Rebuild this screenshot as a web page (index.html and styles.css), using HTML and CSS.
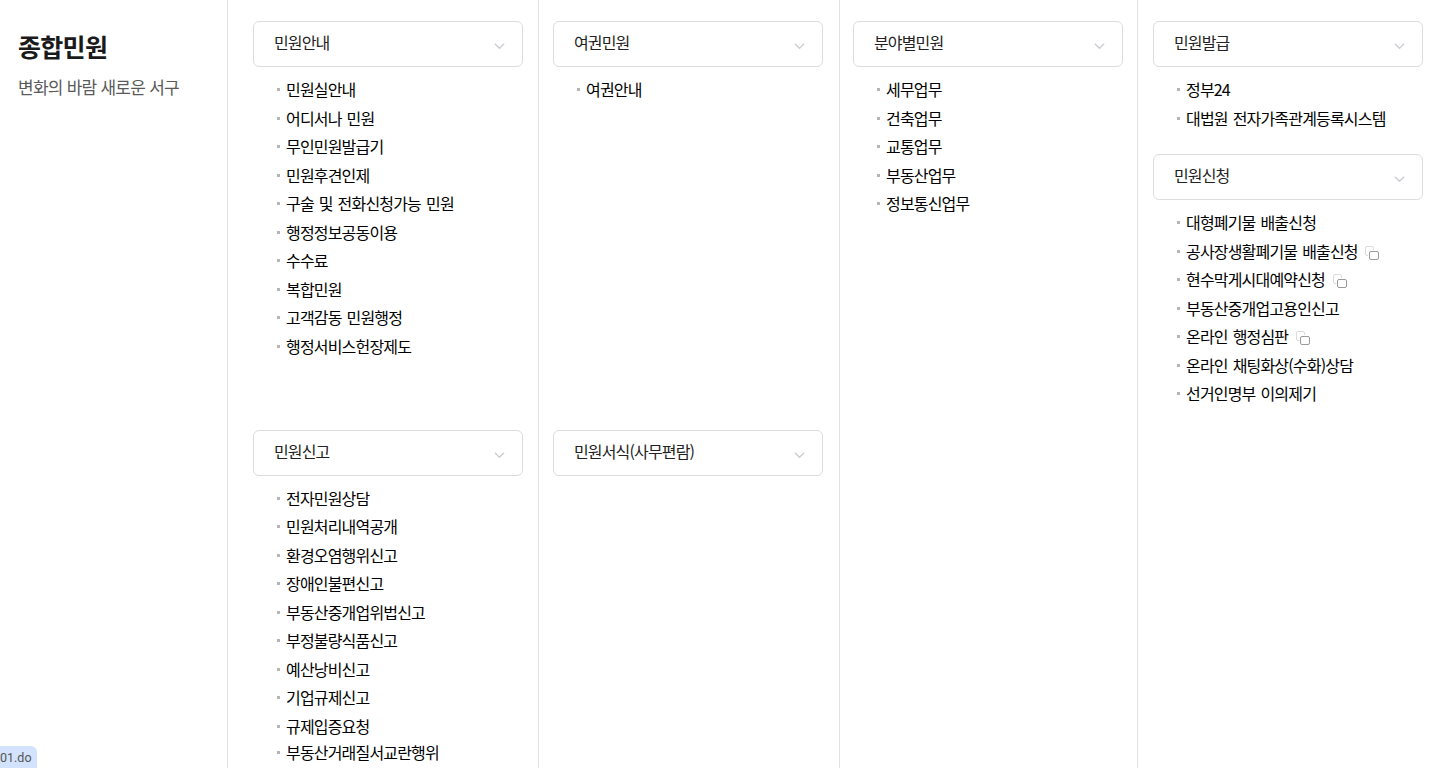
FILE: index.html
```html
<!DOCTYPE html>
<html lang="ko">
<head>
<meta charset="utf-8">
<title>종합민원</title>
<link rel="stylesheet" href="styles.css">
</head>
<body>
<svg class="defs" width="0" height="0" aria-hidden="true">
  <symbol id="chev" viewBox="0 0 12 8"><path d="M1 1.500l5 5 5-5" fill="none" stroke="#c9ccd1" stroke-width="1.300"/></symbol>
  <symbol id="win" viewBox="0 0 14 14">
    <path d="M3 9.500H2A1.500 1.500 0 0 1 .5 8V2A1.500 1.500 0 0 1 2 .5h5A1.500 1.500 0 0 1 8.500 2v2" fill="none" stroke="#dcdcdc"/>
    <rect x="4.500" y="5.500" width="9" height="8" rx="1.500" fill="#fff" stroke="#9a9a9a"/>
  </symbol>
</svg>
<div class="page">
  <aside class="side">
    <h1 class="side-title">종합민원</h1>
    <p class="side-sub">변화의 바람 새로운 서구</p>
  </aside>
  <main class="cols">
    <div class="col col-a">
      <section class="group group-tall">
        <div class="head"><span>민원안내</span><svg class="chev"><use href="#chev"/></svg></div>
        <ul class="list">
          <li>민원실안내</li><li>어디서나 민원</li><li>무인민원발급기</li><li>민원후견인제</li><li>구술 및 전화신청가능 민원</li><li>행정정보공동이용</li><li>수수료</li><li>복합민원</li><li>고객감동 민원행정</li><li>행정서비스헌장제도</li>
        </ul>
      </section>
      <section class="group">
        <div class="head"><span>민원신고</span><svg class="chev"><use href="#chev"/></svg></div>
        <ul class="list list-alt">
          <li>전자민원상담</li><li>민원처리내역공개</li><li>환경오염행위신고</li><li>장애인불편신고</li><li>부동산중개업위법신고</li><li>부정불량식품신고</li><li>예산낭비신고</li><li>기업규제신고</li><li>규제입증요청</li><li class="tight">부동산거래질서교란행위</li>
        </ul>
      </section>
    </div>
    <div class="col col-b">
      <section class="group group-tall">
        <div class="head"><span>여권민원</span><svg class="chev"><use href="#chev"/></svg></div>
        <ul class="list"><li>여권안내</li></ul>
      </section>
      <section class="group">
        <div class="head"><span>민원서식(사무편람)</span><svg class="chev"><use href="#chev"/></svg></div>
      </section>
    </div>
    <div class="col col-c">
      <section class="group">
        <div class="head"><span>분야별민원</span><svg class="chev"><use href="#chev"/></svg></div>
        <ul class="list"><li>세무업무</li><li>건축업무</li><li>교통업무</li><li>부동산업무</li><li>정보통신업무</li></ul>
      </section>
    </div>
    <div class="col col-d">
      <section class="group group-short">
        <div class="head"><span>민원발급</span><svg class="chev"><use href="#chev"/></svg></div>
        <ul class="list"><li>정부24</li><li>대법원 전자가족관계등록시스템</li></ul>
      </section>
      <section class="group">
        <div class="head"><span>민원신청</span><svg class="chev"><use href="#chev"/></svg></div>
        <ul class="list">
          <li>대형폐기물 배출신청</li>
          <li>공사장생활폐기물 배출신청<svg class="win"><use href="#win"/></svg></li>
          <li>현수막게시대예약신청<svg class="win"><use href="#win"/></svg></li>
          <li>부동산중개업고용인신고</li>
          <li>온라인 행정심판<svg class="win"><use href="#win"/></svg></li>
          <li>온라인 채팅화상(수화)상담</li>
          <li>선거인명부 이의제기</li>
        </ul>
      </section>
    </div>
  </main>
</div>
<div class="status">01.do</div>
</body>
</html>
```
FILE: styles.css
```css
* { box-sizing: border-box; }
html, body { margin: 0; height: 768px; overflow: hidden; background: #fff; }
body { font-family: "Noto Sans CJK KR", "Noto Sans", sans-serif; color: #111; }
.defs { position: absolute; }
.page { display: flex; height: 768px; }
.side { width: 228px; flex: none; border-right: 1px solid #e2e2e2; padding: 28px 0 0 18px; }
.side-title { margin: 0; font-size: 25px; line-height: 36px; font-weight: 700; letter-spacing: -0.7px; color: #1a1a1a; }
.side-sub { margin: 11px 0 0; font-size: 17px; line-height: 24px; font-weight: 400; letter-spacing: -0.75px; color: #5a5a5a; }
.cols { display: flex; flex: 1; min-width: 0; }
.col { flex: none; padding-top: 21px; border-right: 1px solid #e2e2e2; }
.col-a { width: 311px; padding-left: 25px; }
.col-b { width: 301px; padding-left: 14px; }
.col-c { width: 298px; padding-left: 13px; }
.col-d { flex: 1; padding-left: 15px; border-right: 0; }
.group { width: 270px; }
.group-tall { height: 409px; }
.group-short { height: 133px; }
.head { display: flex; align-items: center; justify-content: space-between; height: 46px; padding: 0 17px 0 20px; border: 1px solid #dcdcdc; border-radius: 6px; background: #fff; font-size: 16px; letter-spacing: -0.85px; color: #222; }
.head span { position: relative; top: -2px; }
.chev { width: 11px; height: 8px; flex: none; position: relative; top: 2px; }
.list { list-style: none; margin: 8px 0 0; padding: 0 0 0 33px; }
.list-alt { margin-top: 7.5px; }
.list li { position: relative; font-size: 16px; line-height: 28.5px; letter-spacing: -0.82px; word-spacing: 1.3px; font-weight: 400; color: #000; white-space: nowrap; }
.list li::before { content: ""; position: absolute; left: -9px; top: 13px; width: 3px; height: 3px; background: #b5b5b5; }
.list li.tight { margin-top: -2px; }
.win { width: 14px; height: 14px; margin-left: 7.5px; vertical-align: -2px; }
.status { position: fixed; left: 0; bottom: 0; width: 37px; height: 22px; background: #d3e3fd; border-top-right-radius: 6px; font-family: "Roboto", "Liberation Sans", sans-serif; font-size: 12.5px; line-height: 24px; color: #555; overflow: hidden; }
```
